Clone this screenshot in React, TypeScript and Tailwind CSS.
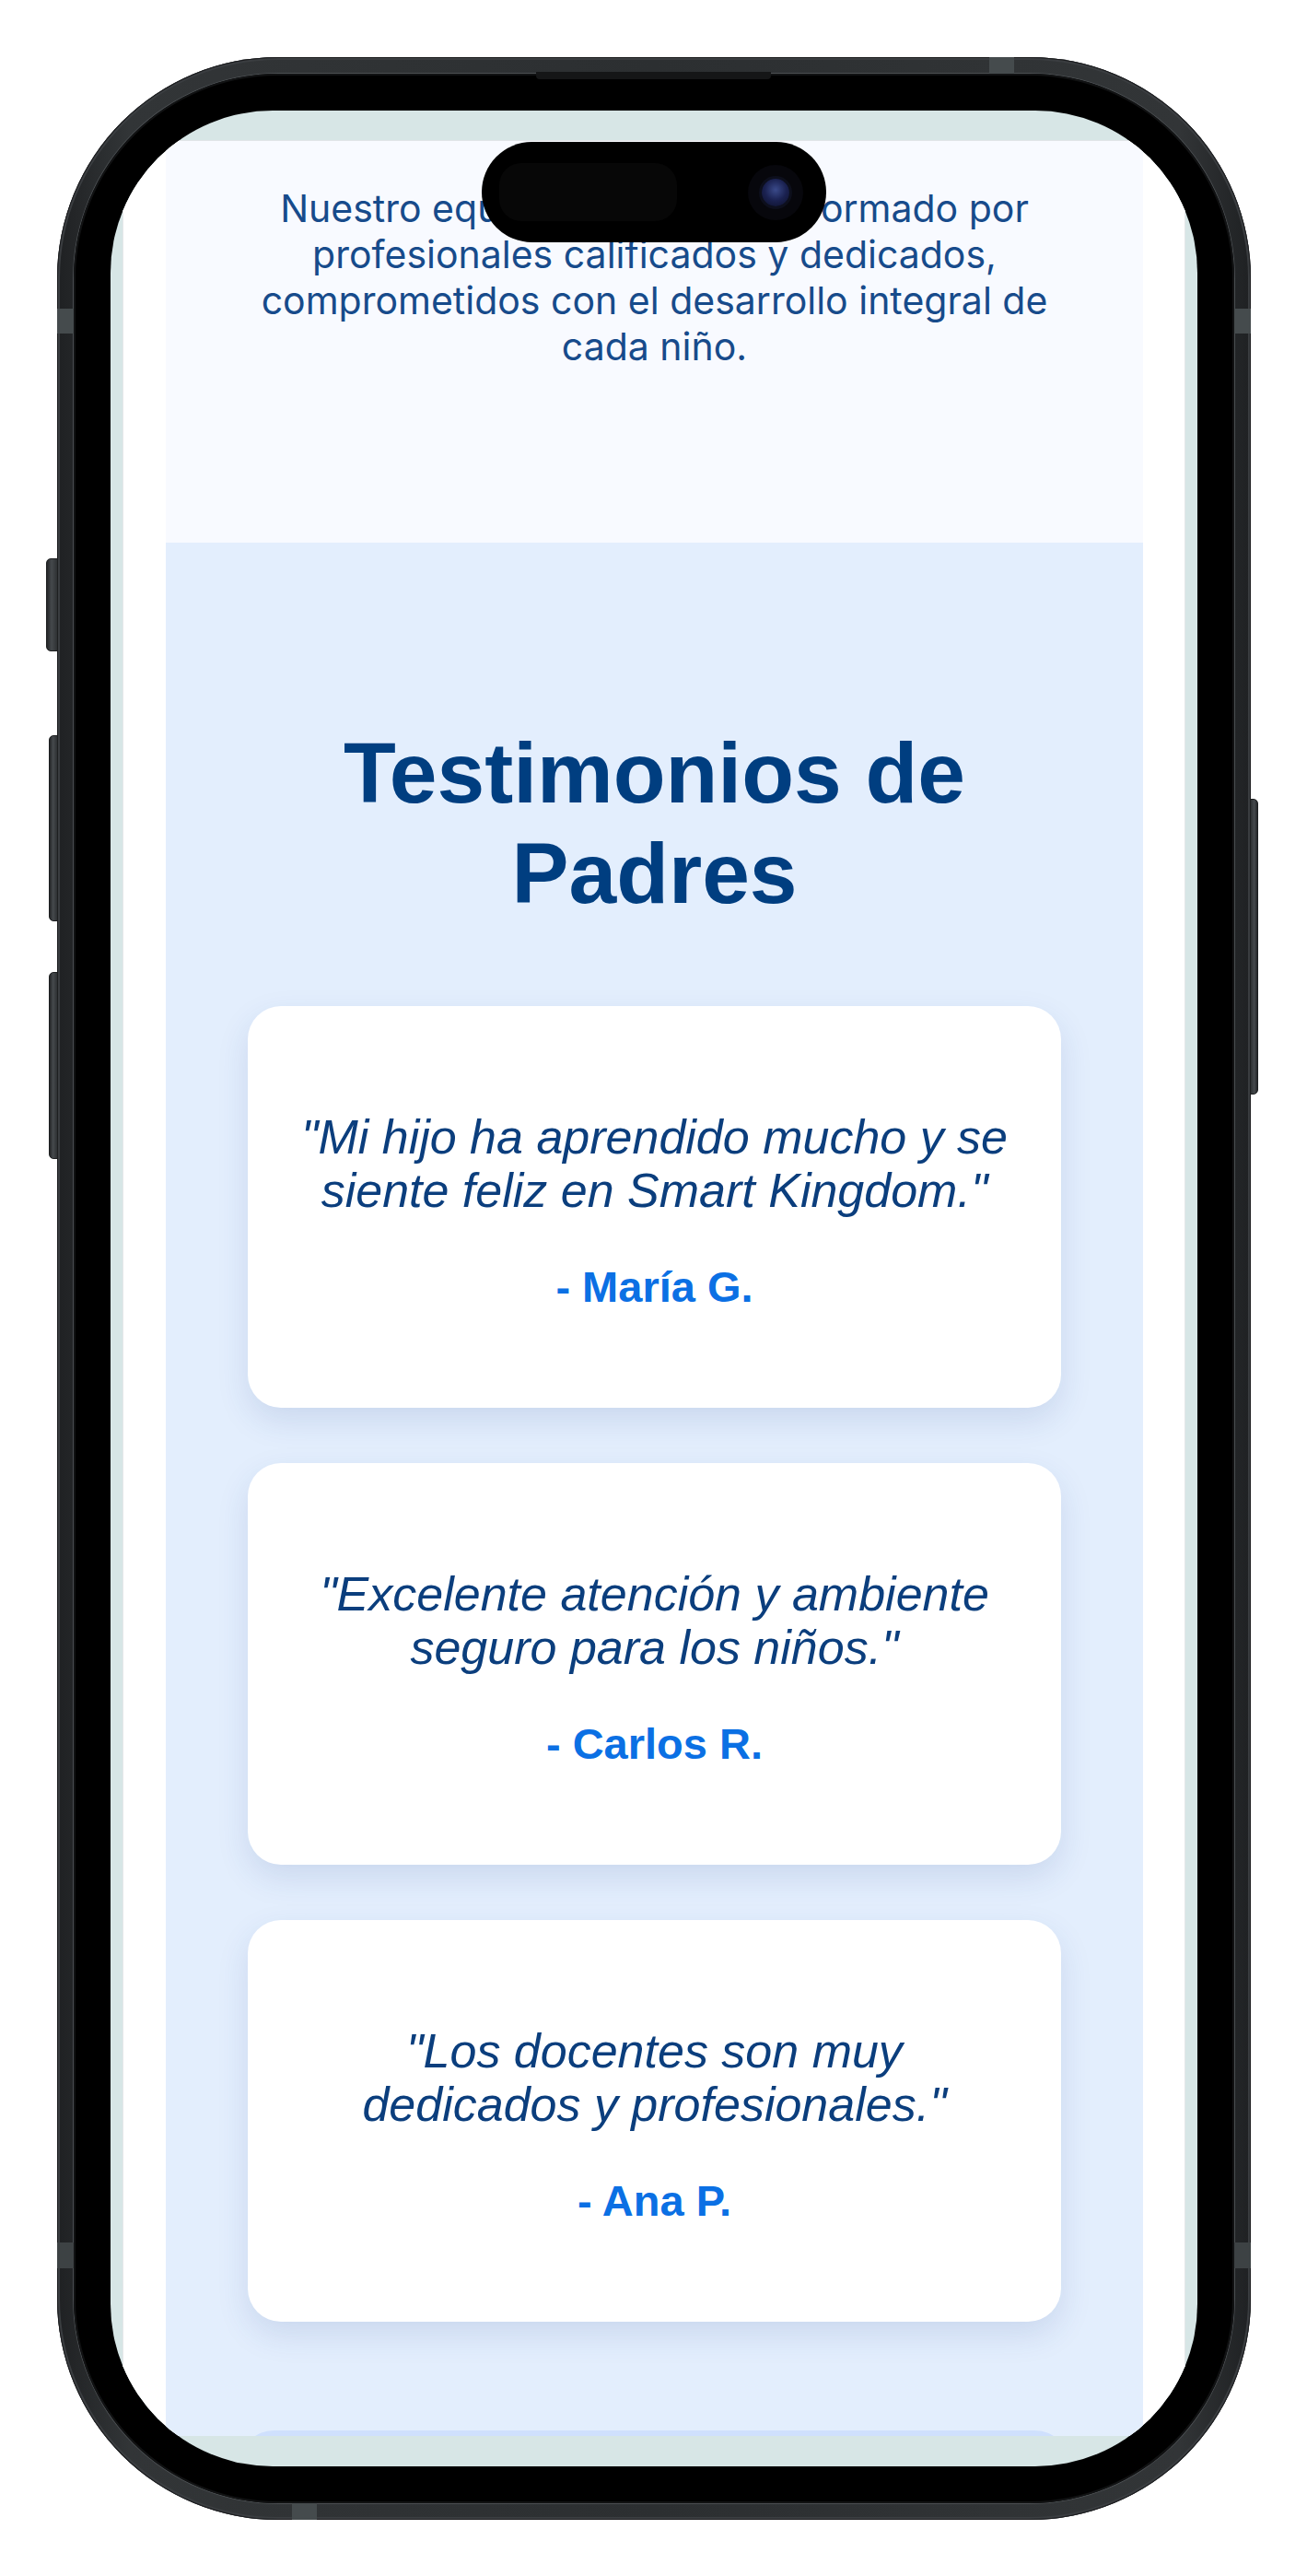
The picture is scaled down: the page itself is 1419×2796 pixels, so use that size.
import React from "react";

const cards = [
  { q1: "\"Mi hijo ha aprendido mucho y se", q2: "siente feliz en Smart Kingdom.\"", a: "- María G." },
  { q1: "\"Excelente atención y ambiente", q2: "seguro para los niños.\"", a: "- Carlos R." },
  { q1: "\"Los docentes son muy", q2: "dedicados y profesionales.\"", a: "- Ana P." },
];

export default function App() {
  return (
    <div className="w-[1419px] h-[2796px] bg-white overflow-hidden pt-[62px] pl-[62px]">
      <div className="relative w-[1296px] h-[2673px] rounded-[240px] bg-[linear-gradient(90deg,#1f2123,#323537_6%,#2c2f31_50%,#323537_94%,#1f2123)] p-[18px] shadow-[inset_0_0_0_1px_#1c1d1f,inset_0_0_0_3px_#3a3d40]">
        {/* side buttons */}
        <div className="absolute left-[-12px] top-[544px] w-[13px] h-[101px] rounded-l-[5px] bg-[linear-gradient(90deg,#242628,#45494c_45%,#2e3133)] border border-[#1d1f20]" />
        <div className="absolute left-[-9px] top-[736px] w-[10px] h-[202px] rounded-l-[5px] bg-[linear-gradient(90deg,#242628,#45494c_45%,#2e3133)] border border-[#1d1f20]" />
        <div className="absolute left-[-9px] top-[993px] w-[10px] h-[203px] rounded-l-[5px] bg-[linear-gradient(90deg,#242628,#45494c_45%,#2e3133)] border border-[#1d1f20]" />
        <div className="absolute right-[-8px] top-[805px] w-[9px] h-[321px] rounded-r-[5px] bg-[linear-gradient(90deg,#2e3133,#45494c_55%,#242628)] border border-[#1d1f20]" />
        {/* antenna lines */}
        <div className="absolute left-[1012px] top-0 w-[27px] h-[18px] bg-[#454b4d]" />
        <div className="absolute left-[255px] bottom-0 w-[27px] h-[18px] bg-[#454b4d]" />
        <div className="absolute left-0 top-[273px] w-[18px] h-[27px] bg-[#454b4d]" />
        <div className="absolute right-0 top-[273px] w-[18px] h-[27px] bg-[#454b4d]" />
        <div className="absolute left-0 top-[2372px] w-[18px] h-[28px] bg-[#3d4244]" />
        <div className="absolute right-0 top-[2372px] w-[18px] h-[28px] bg-[#3d4244]" />
        {/* speaker slot */}
        <div className="absolute left-[520px] top-[16px] w-[255px] h-[8px] rounded-b-[4px] bg-[#151617]" />

        <div className="w-full h-full rounded-[222px] bg-black p-[40px] shadow-[inset_0_0_0_2px_#111213,0_0_0_1px_#4a4e51]">
          <div className="w-full h-full rounded-[176px] overflow-hidden bg-[#d7e6e6] flex flex-col">
            <div className="h-[32px] shrink-0" />
            <div className="h-[2492px] shrink-0 flex border-t border-[#e1e4e7]">
              <div className="w-[13px] shrink-0" />
              <div className="w-[1154px] shrink-0 bg-white border-x border-[#e4e7e9] pl-[46px] pr-[45px] overflow-hidden">
                <div className="w-[1061px] flex flex-col">
                  <section className="h-[436px] bg-[#f8faff] pt-[48px] text-center text-[#174b8b] text-[41px] leading-[50px] font-['Inter','Noto_Sans',sans-serif]">
                    <p>Nuestro equipo docente está formado por</p>
                    <p>profesionales calificados y dedicados,</p>
                    <p>comprometidos con el desarrollo integral de</p>
                    <p>cada niño.</p>
                  </section>
                  <section className="bg-[#e3eefd] pt-[196px] pb-[200px] font-['Liberation_Sans','Arial',sans-serif]">
                    <h2 className="text-center text-[93px] leading-[109px] font-bold text-[#003e80]">
                      <span className="block">Testimonios de</span>
                      <span className="block">Padres</span>
                    </h2>
                    <div className="mt-[89px] flex flex-col gap-[60px] px-[89px]">
                      {cards.map((c) => (
                        <div
                          key={c.a}
                          className="h-[436px] rounded-[36px] bg-white pt-[113px] text-center shadow-[0_14px_34px_rgba(40,70,140,0.13)]"
                        >
                          <p className="italic text-[52px] leading-[58px] text-[#0b3e7d]">
                            <span className="block">{c.q1}</span>
                            <span className="block">{c.q2}</span>
                          </p>
                          <p className="mt-[49px] font-bold text-[47px] leading-[54px] text-[#0b70e4]">{c.a}</p>
                        </div>
                      ))}
                    </div>
                    <div className="mt-[118px] mx-[81px] h-[120px] rounded-[36px] bg-[#cfe0fd]" />
                  </section>
                </div>
              </div>
              <div className="w-[13px] shrink-0" />
            </div>
            <div className="flex-1" />
          </div>
        </div>

        {/* dynamic island */}
        <div className="absolute left-[461px] top-[92px] w-[374px] h-[109px] rounded-full bg-black flex items-center pl-[19px]">
          <div className="w-[193px] h-[63px] rounded-[24px] bg-[#070707]" />
          <div className="ml-[77px] w-[60px] h-[60px] rounded-full bg-[#07070c] flex items-center justify-center">
            <div className="w-[30px] h-[30px] rounded-full bg-[radial-gradient(circle_at_50%_40%,#3a4a8a,#1a2150_50%,#0c0f26)] shadow-[0_0_0_3px_#0d0f1c]" />
          </div>
        </div>
      </div>
    </div>
  );
}
